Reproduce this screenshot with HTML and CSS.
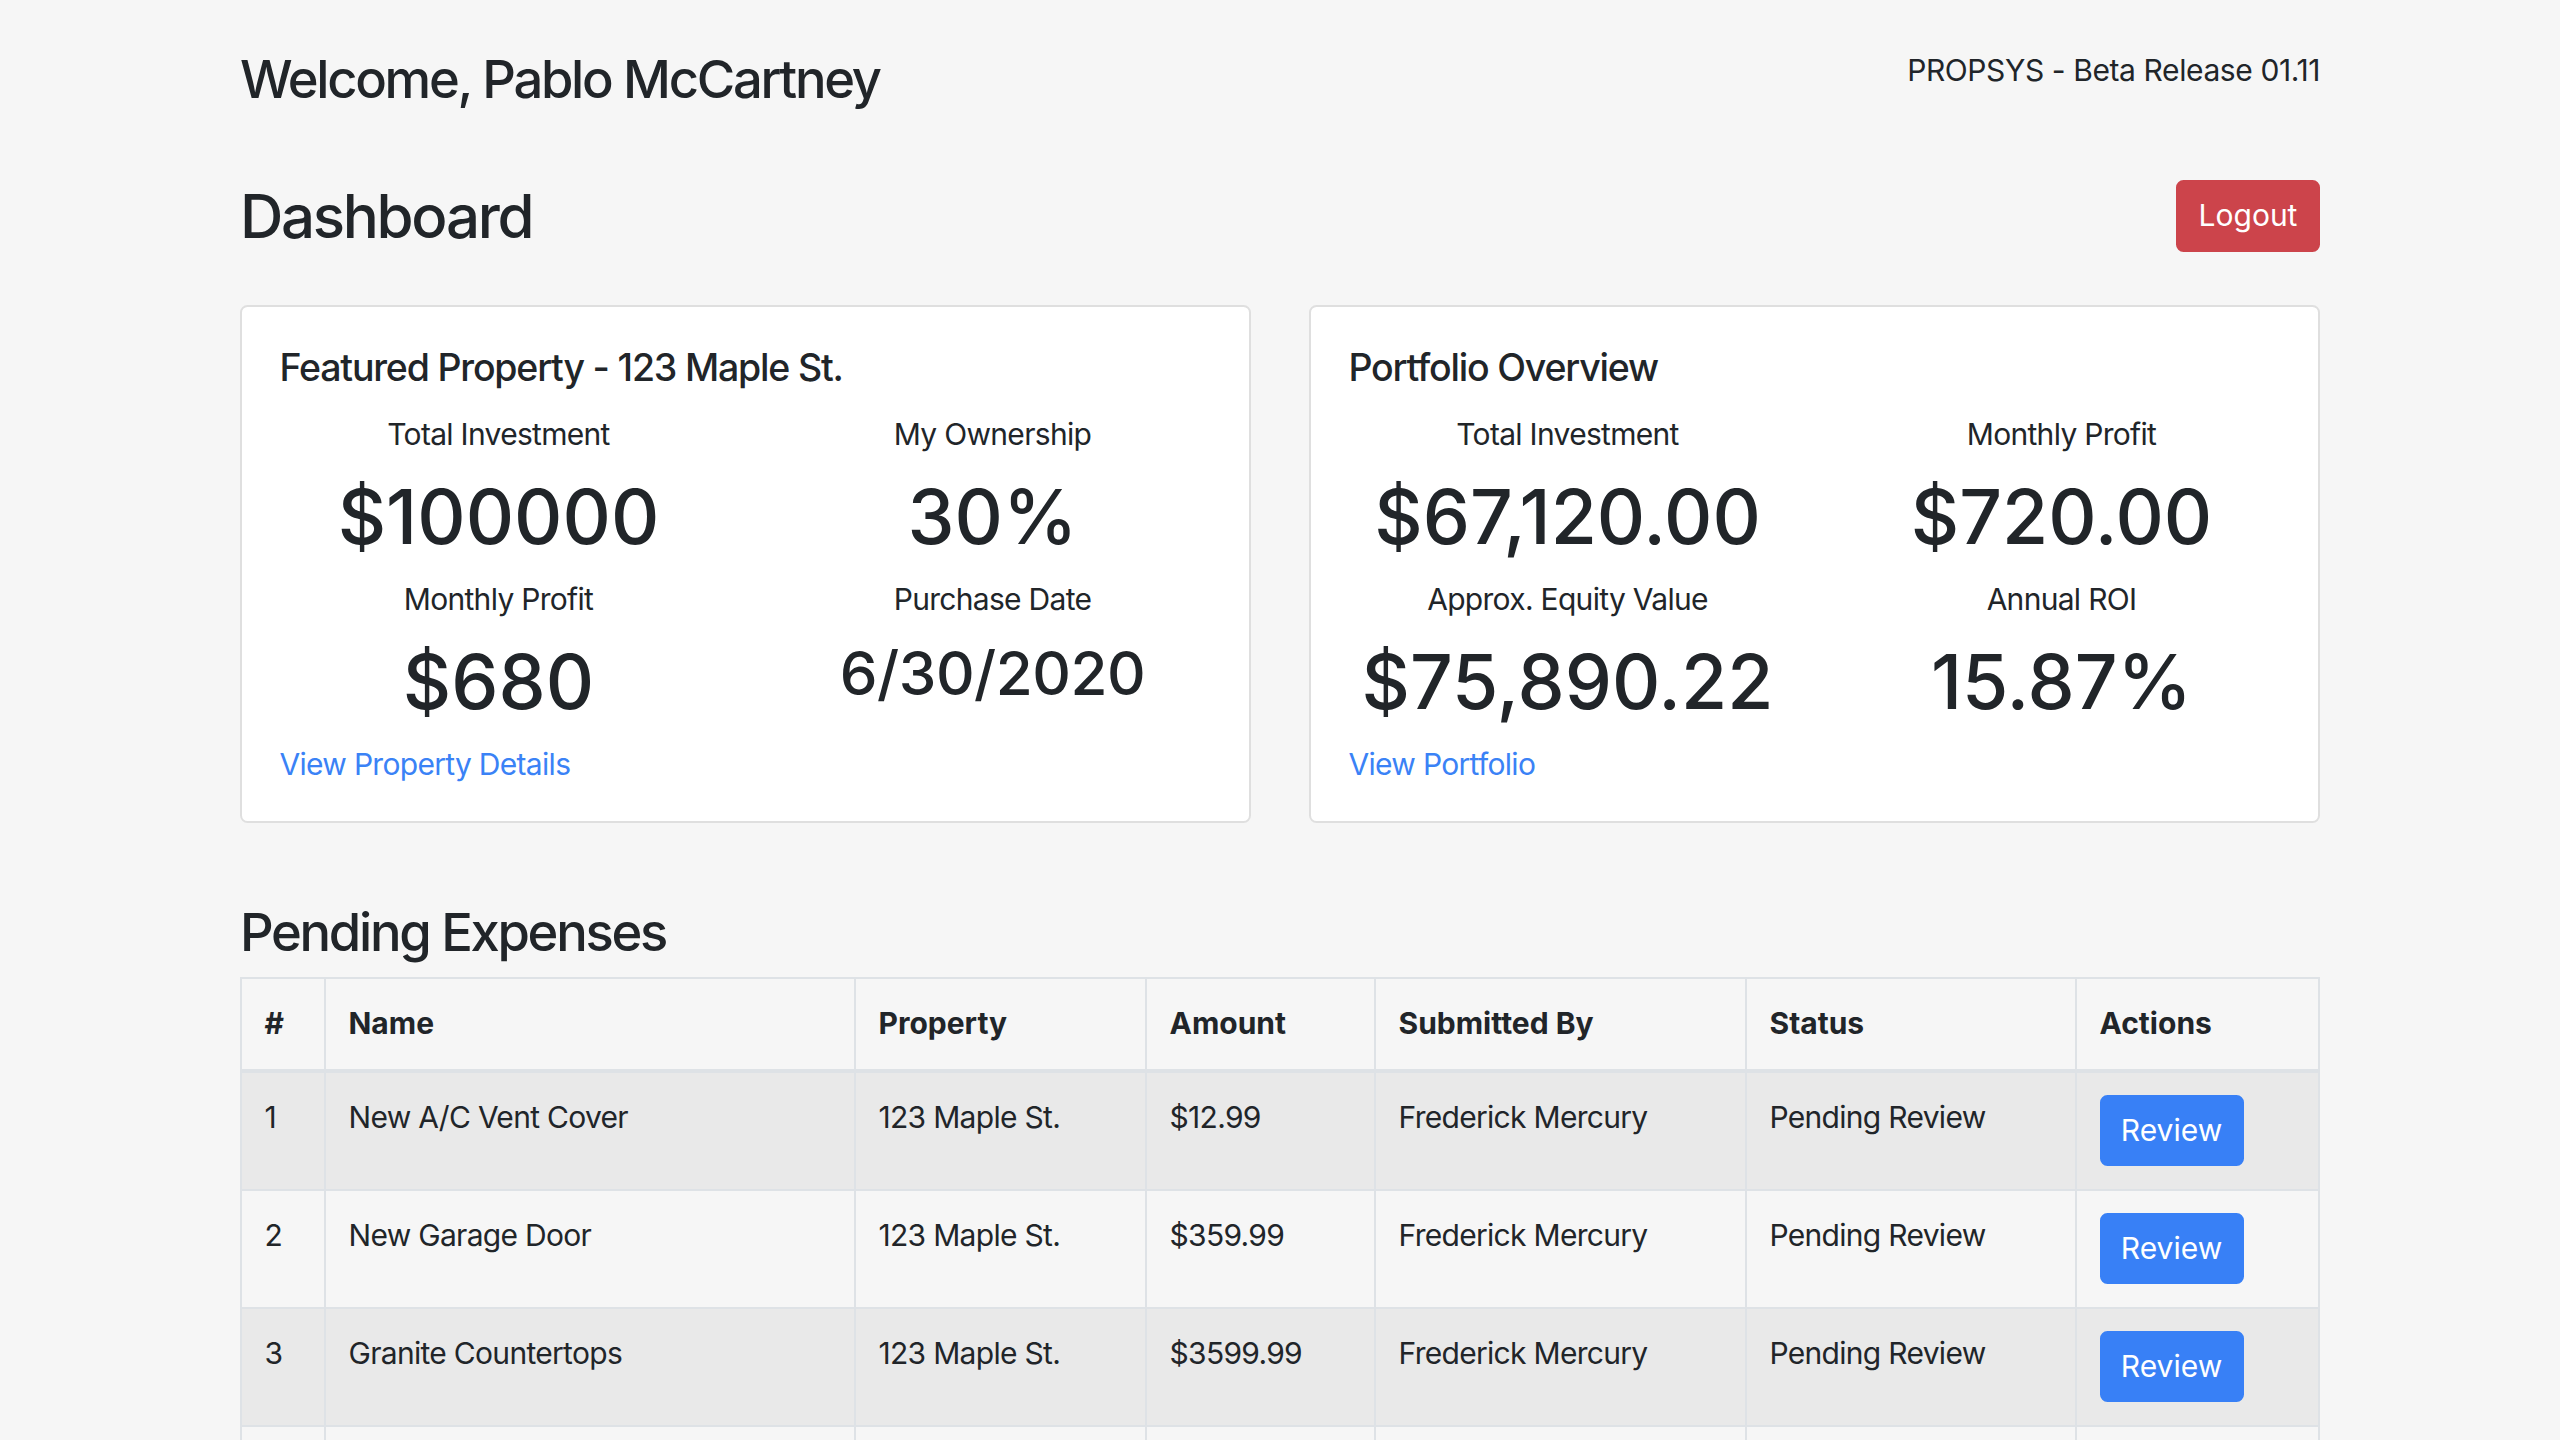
FILE: index.html
```html
<!DOCTYPE html>
<html lang="en">
<head>
<meta charset="utf-8">
<title>PROPSYS - Dashboard</title>
<link rel="stylesheet" href="styles.css">
</head>
<body>
<div class="container">
  <header class="topbar">
    <h3 class="welcome">Welcome, Pablo McCartney</h3>
    <span class="release">PROPSYS - Beta Release 01.11</span>
  </header>

  <div class="titlebar">
    <h2 class="page-title">Dashboard</h2>
    <button class="btn btn-danger btn-logout" type="button">Logout</button>
  </div>

  <div class="cards">
    <section class="card">
      <h5 class="card-title">Featured Property - 123 Maple St.</h5>
      <div class="stats">
        <div class="stat">
          <div class="stat-label">Total Investment</div>
          <div class="stat-value">$100000</div>
        </div>
        <div class="stat">
          <div class="stat-label">My Ownership</div>
          <div class="stat-value">30%</div>
        </div>
        <div class="stat">
          <div class="stat-label">Monthly Profit</div>
          <div class="stat-value">$680</div>
        </div>
        <div class="stat">
          <div class="stat-label">Purchase Date</div>
          <div class="stat-value stat-date">6/30/2020</div>
        </div>
      </div>
      <a class="card-link" href="#">View Property Details</a>
    </section>

    <section class="card">
      <h5 class="card-title">Portfolio Overview</h5>
      <div class="stats">
        <div class="stat">
          <div class="stat-label">Total Investment</div>
          <div class="stat-value">$67,120.00</div>
        </div>
        <div class="stat">
          <div class="stat-label">Monthly Profit</div>
          <div class="stat-value">$720.00</div>
        </div>
        <div class="stat">
          <div class="stat-label">Approx. Equity Value</div>
          <div class="stat-value">$75,890.22</div>
        </div>
        <div class="stat">
          <div class="stat-label">Annual ROI</div>
          <div class="stat-value">15.87%</div>
        </div>
      </div>
      <a class="card-link" href="#">View Portfolio</a>
    </section>
  </div>

  <h3 class="section-title">Pending Expenses</h3>
  <table class="expenses">
    <colgroup>
      <col class="c-num">
      <col class="c-name">
      <col class="c-prop">
      <col class="c-amt">
      <col class="c-by">
      <col class="c-status">
      <col class="c-act">
    </colgroup>
    <thead>
      <tr>
        <th>#</th>
        <th>Name</th>
        <th>Property</th>
        <th>Amount</th>
        <th>Submitted By</th>
        <th>Status</th>
        <th>Actions</th>
      </tr>
    </thead>
    <tbody>
      <tr>
        <td>1</td>
        <td>New A/C Vent Cover</td>
        <td>123 Maple St.</td>
        <td>$12.99</td>
        <td>Frederick Mercury</td>
        <td>Pending Review</td>
        <td><button class="btn btn-primary" type="button">Review</button></td>
      </tr>
      <tr>
        <td>2</td>
        <td>New Garage Door</td>
        <td>123 Maple St.</td>
        <td>$359.99</td>
        <td>Frederick Mercury</td>
        <td>Pending Review</td>
        <td><button class="btn btn-primary" type="button">Review</button></td>
      </tr>
      <tr>
        <td>3</td>
        <td>Granite Countertops</td>
        <td>123 Maple St.</td>
        <td>$3599.99</td>
        <td>Frederick Mercury</td>
        <td>Pending Review</td>
        <td><button class="btn btn-primary" type="button">Review</button></td>
      </tr>
      <tr class="row-empty">
        <td></td>
        <td></td>
        <td></td>
        <td></td>
        <td></td>
        <td></td>
        <td></td>
      </tr>
    </tbody>
  </table>
</div>
</body>
</html>
```

FILE: styles.css
```css
* {
  box-sizing: border-box;
}

body {
  margin: 0;
  background: #f6f6f6;
  color: #212529;
  font-family: Inter, "Noto Sans", "Liberation Sans", sans-serif;
  font-size: 30px;
  line-height: 45px;
  letter-spacing: -0.7px;
}

.container {
  width: 2080px;
  margin: 0 auto;
  padding-bottom: 60px;
}

.topbar {
  display: flex;
  justify-content: space-between;
  align-items: flex-start;
  padding-top: 47.5px;
}

.welcome {
  margin: 0;
  font-size: 52.5px;
  line-height: 63px;
  font-weight: 500;
  letter-spacing: -2.3px;
}

.release {
  font-size: 30px;
  line-height: 45px;
  letter-spacing: -0.4px;
}

.titlebar {
  display: flex;
  justify-content: space-between;
  align-items: center;
  margin-top: 69px;
}

.page-title {
  margin: 0;
  font-size: 60px;
  line-height: 72px;
  font-weight: 500;
  letter-spacing: -2.3px;
}

.btn {
  display: block;
  font-family: inherit;
  font-size: 30px;
  line-height: 45px;
  font-weight: 400;
  letter-spacing: 0;
  color: #fff;
  border: 2px solid transparent;
  border-radius: 7.5px;
  padding: 11px 0;
  width: 144px;
  text-align: center;
  cursor: pointer;
}

.btn-logout {
  padding: 11.5px 0;
}

.btn-danger {
  background: #cc444b;
  border-color: #cc444b;
}

.btn-primary {
  background: #3880f6;
  border-color: #3880f6;
}

.cards {
  display: grid;
  grid-template-columns: 1fr 1fr;
  gap: 58px;
  margin-top: 53.5px;
}

.card {
  background: #fff;
  border: 2px solid #dfdfdf;
  border-radius: 7.5px;
  padding: 37.5px 37.5px 33.5px;
}

.card-title {
  margin: 0 0 22.5px;
  font-size: 37.5px;
  line-height: 45px;
  font-weight: 500;
  letter-spacing: -1.2px;
}

.stats {
  display: grid;
  grid-template-columns: 1fr 1fr;
  margin: 0 -28px;
  text-align: center;
}

.stat-label {
  line-height: 45px;
  margin-bottom: 15px;
}

.stat-value {
  font-size: 75px;
  line-height: 90px;
  font-weight: 500;
  letter-spacing: 0;
  margin-bottom: 15px;
}

.stat-date {
  font-size: 60px;
  line-height: 72px;
  letter-spacing: -0.5px;
}

.card-link {
  display: block;
  color: #3a82f6;
  text-decoration: none;
  line-height: 45px;
}

.section-title {
  margin: 78px 0 13px;
  font-size: 52.5px;
  line-height: 63px;
  font-weight: 500;
  letter-spacing: -2.3px;
}

.expenses {
  width: 100%;
  table-layout: fixed;
  border-collapse: collapse;
}

.c-num { width: 84px; }
.c-name { width: 530px; }
.c-prop { width: 291px; }
.c-amt { width: 229px; }
.c-by { width: 371px; }
.c-status { width: 330px; }
.c-act { width: 243px; }

.expenses th,
.expenses td {
  border: 2px solid #dee2e6;
  padding: 22.5px;
  text-align: left;
  vertical-align: top;
  line-height: 45px;
}

.expenses th {
  font-weight: 700;
  letter-spacing: 0;
  border-bottom-width: 4px;
}

.expenses .row-empty td {
  height: 92px;
}

.expenses tbody tr:nth-child(odd) {
  background: rgba(0, 0, 0, 0.05);
}
```
